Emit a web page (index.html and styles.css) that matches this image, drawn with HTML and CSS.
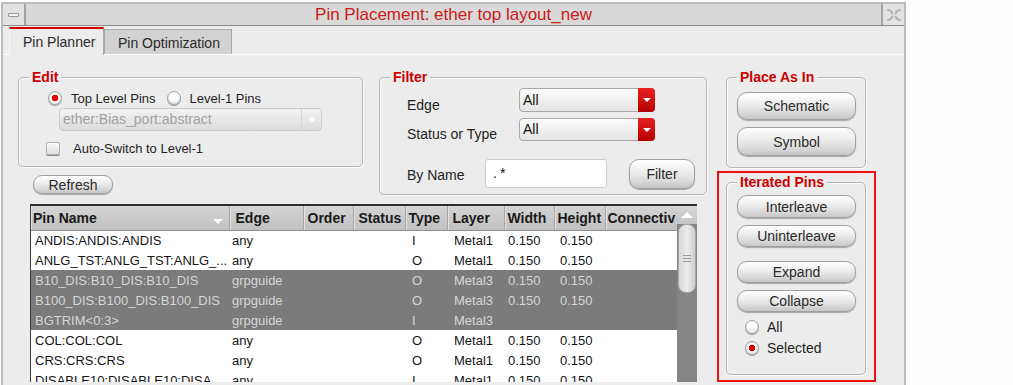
FILE: index.html
```html
<!DOCTYPE html>
<html lang="en">
<head>
    <meta charset="UTF-8">
    <title>Pin Placement: ether top layout_new</title>
    <link rel="stylesheet" href="styles.css">
</head>
<body>
    <div class="window">
        <div class="titlebar">
            <div class="tb-btn tb-min"><span class="dash"></span></div>
            <div class="tb-title">Pin Placement: ether top layout_new</div>
            <div class="tb-btn tb-close">
                <svg width="16" height="16" viewBox="0 0 16 16">
                    <path d="M2 3 Q5 3 6.5 6.5 M14 3 Q11 3 9.5 6.5 M2 13 Q5 13 6.5 9.5 M14 13 Q11 13 9.5 9.5" fill="none" stroke="#b4b4b4" stroke-width="2" stroke-linecap="round"/>
                </svg>
            </div>
        </div>

        <div class="tabs">
            <div class="tab active">Pin Planner</div>
            <div class="tab">Pin Optimization</div>
        </div>

        <div class="pane">
            <div class="left-col">
                <div class="top-row">
                    <div class="edit-col">
                        <div class="group edit-group">
                            <div class="group-title">Edit</div>
                            <div class="radio-row">
                                <span class="radio on"></span><span class="radio-label">Top Level Pins</span>
                                <span class="radio second"></span><span class="radio-label">Level-1 Pins</span>
                            </div>
                            <div class="combo disabled">
                                <span class="combo-text">ether:Bias_port:abstract</span>
                                <span class="combo-arrow"><span class="tri"></span></span>
                            </div>
                            <div class="check-row">
                                <span class="check"></span><span>Auto-Switch to Level-1</span>
                            </div>
                        </div>
                        <button class="btn refresh">Refresh</button>
                    </div>

                    <div class="group filter-group">
                        <div class="group-title">Filter</div>
                        <div class="f-row row-edge">
                            <span class="f-label">Edge</span>
                            <div class="combo red"><span class="combo-text">All</span><span class="combo-btn"><span class="tri"></span></span></div>
                        </div>
                        <div class="f-row row-status">
                            <span class="f-label">Status or Type</span>
                            <div class="combo red"><span class="combo-text">All</span><span class="combo-btn"><span class="tri"></span></span></div>
                        </div>
                        <div class="f-row row-name">
                            <span class="f-label name-label">By Name</span>
                            <div class="text-field">.*</div>
                            <button class="btn filter-btn">Filter</button>
                        </div>
                    </div>
                </div>

                <div class="table-wrap">
                    <table class="pins">
                        <colgroup>
                            <col style="width:198px"><col style="width:74px"><col style="width:50px">
                            <col style="width:52px"><col style="width:42px"><col style="width:57px">
                            <col style="width:50px"><col style="width:51px"><col style="width:72px">
                        </colgroup>
                        <thead>
                            <tr>
                                <th>Pin Name<span class="sort"></span></th>
                                <th>Edge</th><th>Order</th><th>Status</th><th>Type</th>
                                <th>Layer</th><th>Width</th><th>Height</th><th>Connectiv</th>
                            </tr>
                        </thead>
                        <tbody>
                            <tr><td>ANDIS:ANDIS:ANDIS</td><td>any</td><td></td><td></td><td>I</td><td>Metal1</td><td>0.150</td><td>0.150</td><td></td></tr>
                            <tr><td>ANLG_TST:ANLG_TST:ANLG_...</td><td>any</td><td></td><td></td><td>O</td><td>Metal1</td><td>0.150</td><td>0.150</td><td></td></tr>
                            <tr class="sel"><td>B10_DIS:B10_DIS:B10_DIS</td><td>grpguide</td><td></td><td></td><td>O</td><td>Metal3</td><td>0.150</td><td>0.150</td><td></td></tr>
                            <tr class="sel"><td>B100_DIS:B100_DIS:B100_DIS</td><td>grpguide</td><td></td><td></td><td>O</td><td>Metal3</td><td>0.150</td><td>0.150</td><td></td></tr>
                            <tr class="sel"><td>BGTRIM&lt;0:3&gt;</td><td>grpguide</td><td></td><td></td><td>I</td><td>Metal3</td><td></td><td></td><td></td></tr>
                            <tr><td>COL:COL:COL</td><td>any</td><td></td><td></td><td>O</td><td>Metal1</td><td>0.150</td><td>0.150</td><td></td></tr>
                            <tr><td>CRS:CRS:CRS</td><td>any</td><td></td><td></td><td>O</td><td>Metal1</td><td>0.150</td><td>0.150</td><td></td></tr>
                            <tr><td>DISABLE10:DISABLE10:DISA</td><td>any</td><td></td><td></td><td>I</td><td>Metal1</td><td>0.150</td><td>0.150</td><td></td></tr>
                        </tbody>
                    </table>
                    <div class="scrollbar">
                        <div class="sb-up"><span class="tri-up"></span></div>
                        <div class="sb-thumb"><span class="grip"></span></div>
                    </div>
                </div>
            </div>

            <div class="right-col">
                <div class="group place-group">
                    <div class="group-title">Place As In</div>
                    <button class="btn side-btn">Schematic</button>
                    <button class="btn side-btn symbol">Symbol</button>
                </div>
                <div class="highlight">
                    <div class="group iter-group">
                        <div class="group-title">Iterated Pins</div>
                        <button class="btn side-btn interleave">Interleave</button>
                        <button class="btn side-btn">Uninterleave</button>
                        <button class="btn side-btn expand">Expand</button>
                        <button class="btn side-btn">Collapse</button>
                        <div class="opt-row first"><span class="radio"></span><span>All</span></div>
                        <div class="opt-row"><span class="radio on"></span><span>Selected</span></div>
                    </div>
                </div>
            </div>
        </div>
    </div>
</body>
</html>
```

FILE: styles.css
```css
* {
    box-sizing: border-box;
}
body {
    margin: 0;
    height: 385px;
    overflow: hidden;
    background-color: #fdfdfd;
    font-family: "Liberation Sans", Arial, sans-serif;
    font-size: 13px;
    color: #1e1e1e;
}
.window {
    margin: 2px 0 0 1px;
    width: 905px;
    height: 383px;
    border: 2px solid #bcbcbc;
    border-bottom: none;
    background-color: #ececec;
    overflow: hidden;
}

/* title bar */
.titlebar {
    display: flex;
    height: 22px;
    background-color: #d9d9d9;
    border-bottom: 1px solid #8c8c8c;
}
.tb-btn {
    width: 23px;
    display: flex;
    align-items: center;
    justify-content: center;
    background-color: #e2e2e2;
}
.tb-min {
    border-right: 2px solid #a4a4a4;
}
.tb-close {
    border-left: 2px solid #a4a4a4;
}
.dash {
    width: 11px;
    height: 4px;
    border: 1px solid #9a9a9a;
    border-radius: 1px;
    background-color: #f4f4f4;
}
.tb-title {
    flex: 1;
    text-align: center;
    color: #cc1a1a;
    font-size: 17px;
    line-height: 21px;
}

/* tabs */
.tabs {
    display: flex;
    align-items: flex-end;
    height: 29px;
    padding-left: 6px;
    border-bottom: 1px solid #fbfbfb;
}
.tab {
    width: 128px;
    height: 25px;
    padding: 2px 0 0 13px;
    font-size: 14px;
    line-height: 22px;
    color: #2a2a2a;
    background-color: #d2d2d2;
    border: 1px solid #a8a8a8;
    border-bottom: none;
}
.tab.active {
    width: 95px;
    height: 28px;
    margin-bottom: -1px;
    padding-top: 1px;
    line-height: 24px;
    background-color: #ececec;
    border-top: 2px solid #d40000;
    border-left-color: #f8f8f8;
}

/* pane */
.pane {
    display: flex;
    padding: 22px 0 0 15px;
}
.left-col {
    width: 689px;
}
.top-row {
    display: flex;
}
.group {
    border: 1px solid #b6b6b6;
    border-radius: 5px;
    box-shadow: inset 1px 1px 0 #fafafa, 1px 1px 0 #fafafa;
}
.group-title {
    display: table;
    margin: -9px 0 0 10px;
    padding: 0 3px;
    line-height: 16px;
    font-size: 14px;
    font-weight: bold;
    color: #cc0000;
    background-color: #ececec;
}

/* edit */
.edit-col {
    width: 345px;
}
.edit-group {
    height: 90px;
}
.radio-row {
    display: flex;
    align-items: center;
    height: 16px;
    margin: 5px 0 0 29px;
}
.radio {
    flex: none;
    width: 14px;
    height: 14px;
    border-radius: 50%;
    border: 1px solid #a2a2a2;
    background: radial-gradient(circle at 50% 35%, #ffffff 35%, #d2d2d2 100%);
    box-shadow: 0 1px 0 #9a9a9a;
}
.radio.on {
    background: radial-gradient(circle, #e00000 0, #e00000 3px, #ffffff 3.6px, #f2f2f2 5px, #cfcfcf 7px);
}
.radio-label {
    margin-left: 9px;
}
.radio.second {
    margin-left: 11px;
}
.combo {
    display: flex;
    border: 1px solid #b4b4b4;
    border-radius: 4px;
    background: linear-gradient(#fcfcfc, #e4e4e4);
}
.combo-text {
    flex: 1;
    padding-left: 3px;
}
.combo.disabled {
    width: 263px;
    height: 23px;
    margin: 2px 0 0 40px;
    line-height: 21px;
    font-size: 14px;
    border-color: #cbcbcb;
    background: linear-gradient(#f3f3f3, #dcdcdc);
}
.combo.disabled .combo-text {
    color: #a2a2a2;
}
.combo-arrow {
    width: 20px;
    display: flex;
    align-items: center;
    justify-content: center;
    border-left: 1px solid #d4d4d4;
}
.tri {
    width: 0;
    height: 0;
    border-left: 4px solid transparent;
    border-right: 4px solid transparent;
    border-top: 4px solid #ffffff;
}
.check-row {
    display: flex;
    align-items: center;
    height: 16px;
    margin: 9px 0 0 27px;
}
.check {
    width: 14px;
    height: 13px;
    margin-right: 13px;
    border: 1px solid #b0b0b0;
    border-radius: 2px;
    background: linear-gradient(#fafafa, #dedede);
    box-shadow: 0 1px 0 #8a8a8a;
}

/* buttons */
.btn {
    display: block;
    padding: 0;
    font-family: "Liberation Sans", Arial, sans-serif;
    font-size: 14px;
    color: #2a2a2a;
    border: 1px solid #a0a0a0;
    border-radius: 9px;
    background: linear-gradient(#ffffff, #ececec 45%, #d6d6d6 80%, #c6c6c6);
    box-shadow: 0 1px 1px rgba(0, 0, 0, 0.3);
}
.refresh {
    width: 80px;
    height: 19px;
    margin: 8px 0 0 15px;
    line-height: 16px;
}

/* filter */
.filter-group {
    width: 328px;
    height: 118px;
    margin-left: 16px;
}
.f-row {
    display: flex;
    align-items: flex-start;
    padding-left: 27px;
    font-size: 14px;
}
.f-label {
    width: 112px;
    line-height: 16px;
}
.row-edge {
    margin-top: 3px;
}
.row-edge .f-label {
    margin-top: 9px;
}
.row-status {
    margin-top: 5px;
}
.row-status .f-label {
    margin-top: 8px;
}
.combo.red {
    width: 136px;
    height: 24px;
    line-height: 22px;
    color: #111;
    border-color: #a8a8a8;
}
.row-status .combo.red {
    height: 23px;
    line-height: 21px;
}
.combo-btn {
    width: 17px;
    margin: -1px -1px -1px 0;
    display: flex;
    align-items: center;
    justify-content: center;
    border-radius: 0 4px 4px 0;
    background: linear-gradient(#e82020, #b40000);
}
.row-name {
    margin-top: 17px;
}
.name-label {
    width: 78px;
    margin-top: 8px;
}
.text-field {
    width: 122px;
    height: 29px;
    padding-left: 7px;
    line-height: 27px;
    letter-spacing: 3px;
    color: #111;
    background-color: #ffffff;
    border: 1px solid #cfcfcf;
    border-radius: 3px;
}
.filter-btn {
    width: 66px;
    height: 30px;
    margin-left: 22px;
    border-radius: 10px;
}

/* table */
.table-wrap {
    display: flex;
    width: 667px;
    height: 178px;
    margin: 9px 0 0 12px;
    border-top: 2px solid #2e2e2e;
    border-left: 1px solid #3a3a3a;
    overflow: hidden;
}
.pins {
    width: 646px;
    table-layout: fixed;
    border-collapse: collapse;
    background-color: #ffffff;
    align-self: flex-start;
}
.pins th {
    height: 24px;
    padding: 0 0 0 3px;
    text-align: left;
    font-size: 14px;
    white-space: nowrap;
    overflow: hidden;
    color: #1a1a1a;
    background: linear-gradient(#d4d4d4, #c0c0c0);
    border-right: 1px solid #a6a6a6;
    border-bottom: 1px solid #8e8e8e;
    box-shadow: inset 1px 0 0 #e2e2e2;
}
.pins th:first-child {
    padding-left: 2px;
}
.pins th:nth-child(2) {
    padding-left: 6px;
}
.pins th:nth-child(3) {
    padding-left: 4px;
}
.pins th:nth-child(4),
.pins th:nth-child(6) {
    padding-left: 5px;
}
.pins th:last-child {
    padding-left: 2px;
    border-right: none;
}
.sort {
    float: right;
    margin: 9px 6px 0 0;
    width: 0;
    height: 0;
    border-left: 5px solid transparent;
    border-right: 5px solid transparent;
    border-top: 5px solid #ffffff;
}
.pins td {
    height: 20px;
    padding: 0 0 0 4px;
    white-space: nowrap;
    overflow: hidden;
    color: #151515;
}
.pins td:nth-child(2) {
    padding-left: 3px;
}
.pins td:nth-child(5),
.pins td:nth-child(6) {
    padding-left: 7px;
}
.pins td:nth-child(8) {
    padding-left: 6px;
}
.pins tr.sel td {
    background-color: #7b7b7b;
    color: #d6d6d6;
}
.scrollbar {
    width: 20px;
    flex: none;
    background-color: #858585;
    display: flex;
    flex-direction: column;
}
.sb-up {
    height: 18px;
    display: flex;
    align-items: center;
    justify-content: center;
    background: linear-gradient(#d6d6d6, #c4c4c4);
}
.tri-up {
    width: 0;
    height: 0;
    border-left: 6px solid transparent;
    border-right: 6px solid transparent;
    border-bottom: 6px solid #ffffff;
}
.sb-thumb {
    height: 69px;
    margin: 0 1px;
    display: flex;
    align-items: center;
    justify-content: center;
    border-radius: 8px;
    border: 1px solid #a8a8a8;
    background: linear-gradient(90deg, #d6d6d6, #ececec 50%, #cdcdcd);
}
.grip {
    width: 8px;
    height: 7px;
    border-top: 1px solid #9a9a9a;
    border-bottom: 1px solid #9a9a9a;
    background: linear-gradient(transparent 2px, #9a9a9a 2px, #9a9a9a 3px, transparent 3px);
}

/* right column */
.right-col {
    width: 159px;
    margin-left: 10px;
}
.place-group {
    width: 140px;
    height: 91px;
    margin-left: 9px;
}
.side-btn {
    width: 119px;
    height: 28px;
    margin: 7px 0 0 10px;
    border-radius: 10px;
}
.side-btn.symbol {
    height: 29px;
}
.highlight {
    height: 211px;
    margin-top: 3px;
    padding: 9px 0 0 7px;
    border: 2px solid #f01010;
}
.iter-group {
    width: 140px;
    height: 193px;
}
.iter-group .side-btn {
    height: 22px;
}
.iter-group .interleave {
    height: 23px;
    margin-top: 5px;
}
.iter-group .expand {
    margin-top: 14px;
}
.opt-row {
    display: flex;
    align-items: center;
    gap: 8px;
    height: 16px;
    margin: 5px 0 0 18px;
    font-size: 14px;
}
.opt-row.first {
    margin-top: 7px;
}
```
